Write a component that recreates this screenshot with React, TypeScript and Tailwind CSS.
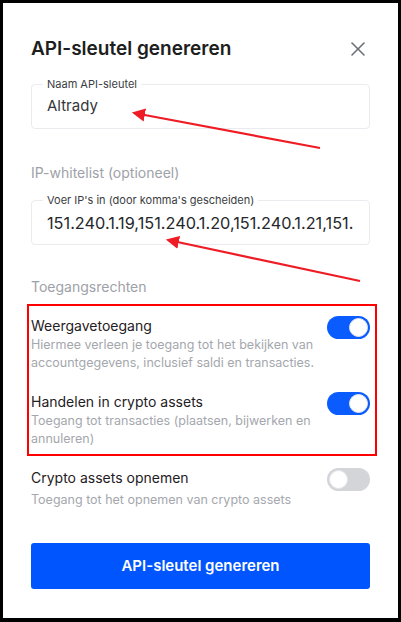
import { X } from 'lucide-react';

function Toggle({ on }: { on: boolean }) {
  return (
    <div
      className={`flex h-[23px] w-[43px] shrink-0 items-center rounded-full p-[2px] ${
        on ? 'justify-end bg-[#0a5cff]' : 'justify-start bg-[#d3d5d9]'
      }`}
    >
      <div className="h-[19px] w-[19px] rounded-full border border-[#e3e6ec] bg-white" />
    </div>
  );
}

function Permission({ title, desc, on, gap = '' }: { title: string; desc: string; on: boolean; gap?: string }) {
  return (
    <div className="flex items-start justify-between">
      <div>
        <div className="text-[14px] leading-[20px] text-[#1f2023]">{title}</div>
        <div className={`w-[290px] text-[12.5px] leading-[18px] text-[#a4a7ad] ${gap}`}>{desc}</div>
      </div>
      <Toggle on={on} />
    </div>
  );
}

export default function App() {
  return (
    <div
      className="relative h-[622px] w-[401px] bg-black pb-[4px] pl-[3px] pr-[3px] pt-[3px]"
      style={{ fontFamily: 'Inter, "Noto Sans", sans-serif' }}
    >
      <div className="flex h-full flex-col bg-white px-[28px] pt-[32px]">
        {/* Header */}
        <div className="flex items-center justify-between">
          <h1 className="text-[19px] font-semibold leading-[28px] text-[#1d1e20]">API-sleutel genereren</h1>
          <X size={24} strokeWidth={1.6} className="text-[#6b6f76]" />
        </div>

        {/* Naam */}
        <fieldset className="mt-[14px] h-[52px] min-w-0 rounded-[4px] border border-[#e9ebef] px-[15px]">
          <legend className="ml-[-4px] px-[4px] text-[11px] leading-[14px] text-[#3b3d42]">Naam API-sleutel</legend>
          <div className="pt-[5px] text-[15px] leading-[20px] text-[#34363a]">Altrady</div>
        </fieldset>

        <div className="mt-[34px] text-[14px] leading-[20px] text-[#9ea1a7]">IP-whitelist (optioneel)</div>

        {/* IP's */}
        <fieldset className="mt-[10px] h-[52px] min-w-0 rounded-[4px] border border-[#e9ebef] pl-[15px] pr-[10px]">
          <legend className="ml-[-4px] px-[4px] text-[11px] leading-[14px] text-[#3b3d42]">
            Voer IP's in (door komma's gescheiden)
          </legend>
          <div className="overflow-hidden whitespace-nowrap pt-[5px] text-[16.3px] leading-[22px] text-[#26282c]">
            151.240.1.19,151.240.1.20,151.240.1.21,151.
          </div>
        </fieldset>

        <div className="mt-[32px] text-[14px] leading-[20px] text-[#9ea1a7]">Toegangsrechten</div>

        {/* Highlighted rechten */}
        <div className="ml-[-4px] mr-[-7px] mt-[7px] flex flex-col gap-[20px] border-2 border-[#ff0000] pb-[6px] pl-[2px] pr-[5px] pt-[10px]">
          <Permission
            title="Weergavetoegang"
            desc="Hiermee verleen je toegang tot het bekijken van accountgegevens, inclusief saldi en transacties."
            on
          />
          <Permission
            title="Handelen in crypto assets"
            desc="Toegang tot transacties (plaatsen, bijwerken en annuleren)"
            on
          />
        </div>

        <div className="mt-[12px]">
          <Permission
            title="Crypto assets opnemen"
            desc="Toegang tot het opnemen van crypto assets"
            on={false}
            gap="mt-[3px]"
          />
        </div>

        <button className="mt-[34px] h-[46px] w-full rounded-[3px] bg-[#0055ff] text-[15px] font-semibold text-white">
          API-sleutel genereren
        </button>
      </div>

      {/* Annotation arrows */}
      <svg className="pointer-events-none absolute inset-0" width="401" height="622">
        <defs>
          <marker id="head" markerWidth="6" markerHeight="6" refX="5" refY="3" orient="auto" markerUnits="strokeWidth">
            <path d="M0,0 L6,3 L0,6 z" fill="#ee1c25" />
          </marker>
        </defs>
        <line x1="320" y1="148" x2="134" y2="113" stroke="#ee1c25" strokeWidth="2.2" markerEnd="url(#head)" />
        <line x1="360" y1="281" x2="168" y2="240" stroke="#ee1c25" strokeWidth="2.2" markerEnd="url(#head)" />
      </svg>
    </div>
  );
}
